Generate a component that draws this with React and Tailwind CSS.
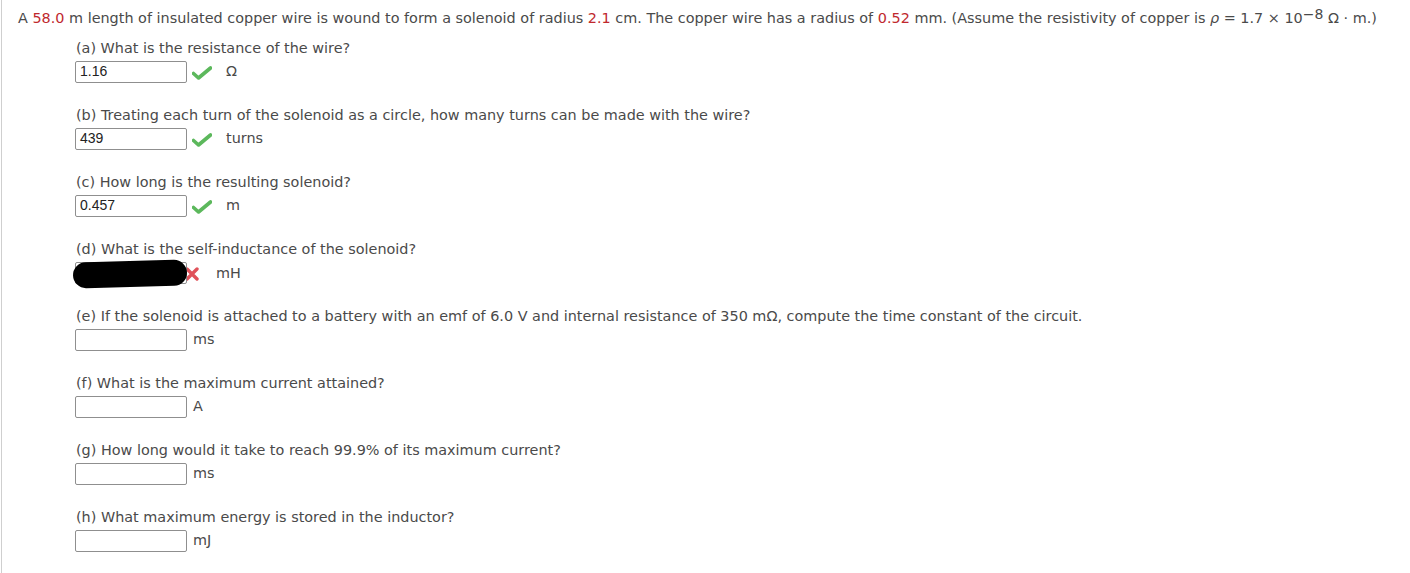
import React from "react"

const Check = () => (
  <svg width="20" height="14" viewBox="0 0 20 14" className="shrink-0">
    <path d="M1.5 7.5 L6.5 12 L18.5 2" fill="none" stroke="#5cb85c" strokeWidth="3.6" strokeLinecap="round" strokeLinejoin="round" />
  </svg>
)

const Cross = () => (
  <svg width="14" height="14" viewBox="0 0 14 14" className="shrink-0">
    <path d="M2 2 L12 12 M12 2 L2 12" stroke="#e0525a" strokeWidth="3.4" strokeLinecap="round" />
  </svg>
)

const Red = ({ children }) => <span className="text-[#c0282d]">{children}</span>

const parts = [
  { label: "(a) What is the resistance of the wire?", value: "1.16", unit: "Ω", state: "ok" },
  { label: "(b) Treating each turn of the solenoid as a circle, how many turns can be made with the wire?", value: "439", unit: "turns", state: "ok" },
  { label: "(c) How long is the resulting solenoid?", value: "0.457", unit: "m", state: "ok" },
  { label: "(d) What is the self-inductance of the solenoid?", value: "", unit: "mH", state: "bad" },
  { label: "(e) If the solenoid is attached to a battery with an emf of 6.0 V and internal resistance of 350 mΩ, compute the time constant of the circuit.", value: "", unit: "ms" },
  { label: "(f) What is the maximum current attained?", value: "", unit: "A" },
  { label: "(g) How long would it take to reach 99.9% of its maximum current?", value: "", unit: "ms" },
  { label: "(h) What maximum energy is stored in the inductor?", value: "", unit: "mJ" },
]

function Part({ p }) {
  return (
    <div className="h-[67px]">
      <div className="leading-[17px]">{p.label}</div>
      <div className="-ml-[1px] mt-[3px] flex items-center h-[23px]">
        <div className="relative">
          <div className="w-[112px] h-[22px] border border-[#8f8f8f] rounded-[2px] bg-white px-[4px] flex items-center text-[14px] text-[#222] font-['Liberation_Sans',Arial,sans-serif]">
            {p.value}
          </div>
          {p.state === "bad" && (
            <div className="absolute -left-[2px] -top-[1px] w-[114px] h-[26px] bg-black rounded-[13px] rotate-[-1.5deg]" />
          )}
        </div>
        {p.state === "ok" && (
          <div className="ml-[5px] mt-[3px] flex items-center">
            <Check />
            <span className="ml-[14px] -mt-[2px]">{p.unit}</span>
          </div>
        )}
        {p.state === "bad" && (
          <div className="ml-[-2px] mt-[2px] flex items-center">
            <Cross />
            <span className="ml-[17px]">{p.unit}</span>
          </div>
        )}
        {!p.state && <span className="ml-[6px]">{p.unit}</span>}
      </div>
    </div>
  )
}

export default function App() {
  return (
    <div className="w-[1410px] h-[573px] bg-white font-['DejaVu_Sans',Verdana,sans-serif] text-[14.4px] text-[#4a4a4a] overflow-hidden">
      <div className="h-full ml-[1px] border-l border-[#cfcfcf] pl-[16px] pt-[10px]">
        <div className="leading-[17px] whitespace-nowrap">
          A <Red>58.0</Red> m length of insulated copper wire is wound to form a solenoid of radius <Red>2.1</Red> cm. The copper wire has a radius of <Red>0.52</Red> mm. (Assume the resistivity of copper is <i>ρ</i> = 1.7 × 10<sup className="text-[14px] relative -top-[4px]">−8</sup> Ω · m.)
        </div>
        <div className="pl-[58px] pt-[13px]">
          {parts.map((p) => (
            <Part key={p.label} p={p} />
          ))}
        </div>
      </div>
    </div>
  )
}
